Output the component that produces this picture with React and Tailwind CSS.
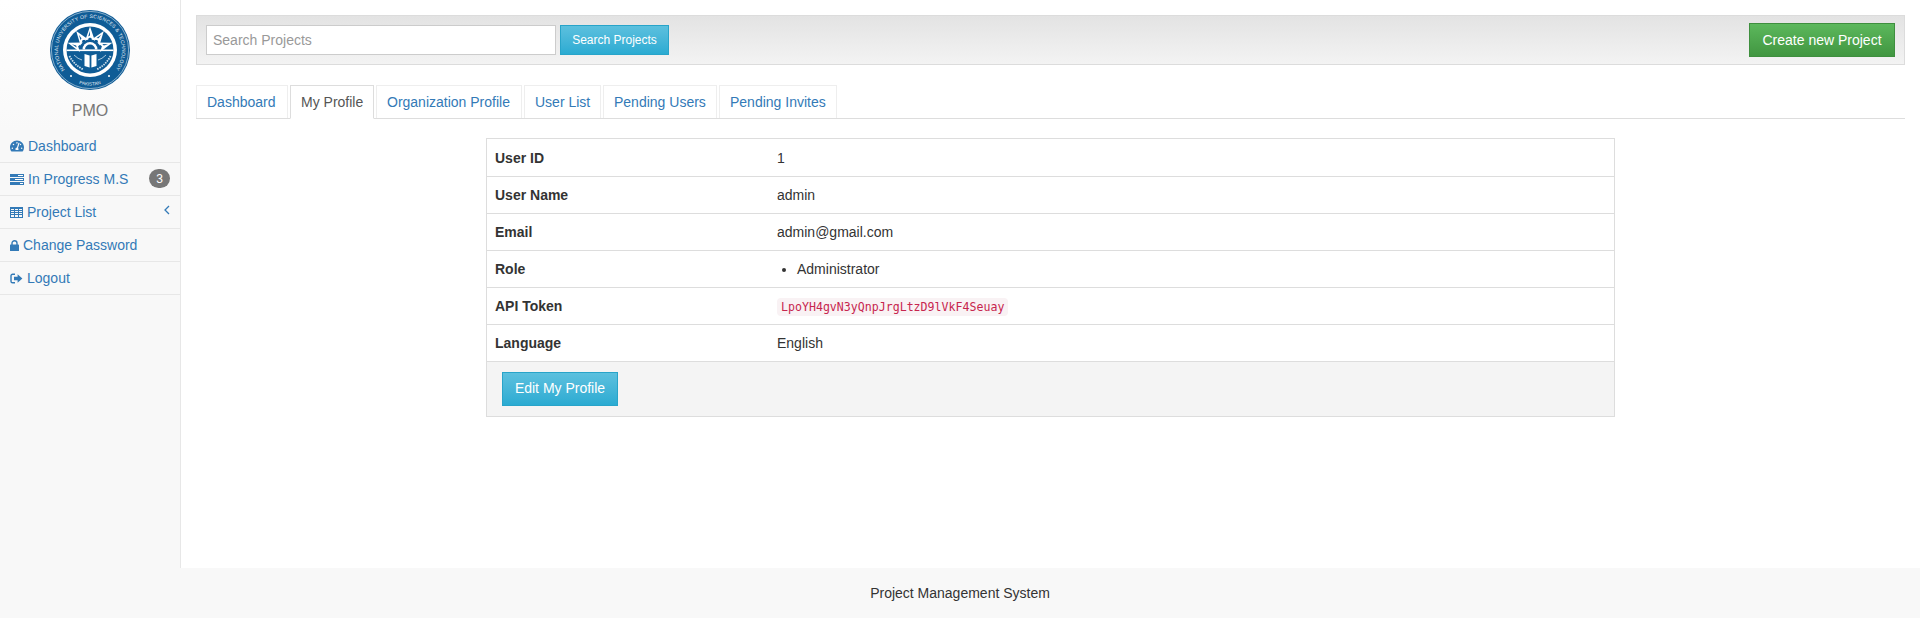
import React from 'react';
import { FaTachometerAlt } from 'react-icons/fa';

const TasksIcon = () => (
  <svg width="14" height="11" viewBox="0 0 14 11" className="shrink-0">
    <rect x="0" y="0" width="14" height="3" fill="#337ab7" />
    <rect x="0" y="4" width="14" height="3" fill="#337ab7" />
    <rect x="0" y="8" width="14" height="3" fill="#337ab7" />
    <rect x="8" y="1" width="5" height="1" fill="#fff" />
    <rect x="5" y="5" width="8" height="1" fill="#fff" />
    <rect x="10" y="9" width="3" height="1" fill="#fff" />
  </svg>
);

const GridIcon = () => (
  <svg width="13" height="11" viewBox="0 0 13 11" className="shrink-0">
    <rect x="0.5" y="0.5" width="12" height="10" fill="none" stroke="#337ab7" />
    <path d="M0 3.5H13M0 5.5H13M0 7.5H13M4.5 0V11M8.5 0V11" stroke="#337ab7" strokeWidth="1" fill="none" />
    <rect x="0" y="0" width="13" height="2" fill="#337ab7" />
  </svg>
);

const LockIcon = () => (
  <svg width="9" height="11" viewBox="0 0 9 11" className="shrink-0">
    <path d="M2 5V3.2a2.5 2.5 0 0 1 5 0V5" fill="none" stroke="#337ab7" strokeWidth="1.4" />
    <rect x="0" y="4.6" width="9" height="6.4" rx="0.6" fill="#337ab7" />
  </svg>
);

const LogoutIcon = () => (
  <svg width="13" height="11" viewBox="0 0 13 11" className="shrink-0">
    <path d="M5 1.2H2.6A1.6 1.6 0 0 0 1 2.8v5.4a1.6 1.6 0 0 0 1.6 1.6H5" fill="none" stroke="#337ab7" strokeWidth="1.4" />
    <path d="M4 3.8h3.6V1.2L12.4 5.5 7.6 9.8V7.2H4z" fill="#337ab7" />
  </svg>
);

// one ray of the star on the seal
const Ray = ({ angle }) => (
  <g transform={`rotate(${angle} 40 40)`}>
    <path d="M40 16.5 L35 31 L40 27.5 L45 31 Z" fill="#fff" />
    <path d="M40 21 L38.2 26.5 L40 25.4 Z" fill="#0f5c96" />
  </g>
);

// University seal, drawn by hand
const Seal = () => (
  <svg width="80" height="80" viewBox="0 0 80 80">
    <defs>
      <path id="sealTop" d="M 14.8 59.7 A 32 32 0 1 1 65.2 59.7" />
      <path id="sealBottom" d="M 24 71.7 A 35.5 35.5 0 0 0 56 71.7" />
    </defs>
    <circle cx="40" cy="40" r="40" fill="#0f5c96" />
    <circle cx="40" cy="40" r="38.6" fill="none" stroke="#fff" strokeWidth="0.5" />
    <text fontSize="5" fill="#e4eef5" fontFamily="Liberation Sans, sans-serif">
      <textPath href="#sealTop" textLength="142">NATIONAL UNIVERSITY OF SCIENCES &amp; TECHNOLOGY</textPath>
    </text>
    <text fontSize="4.6" fill="#e4eef5" fontFamily="Liberation Sans, sans-serif" textAnchor="middle">
      <textPath href="#sealBottom" startOffset="50%">PAKISTAN</textPath>
    </text>
    <circle cx="21" cy="66" r="1" fill="#fff" />
    <circle cx="59" cy="66" r="1" fill="#fff" />
    <circle cx="40" cy="40" r="27" fill="#fff" />
    <circle cx="40" cy="40" r="23.5" fill="#0f5c96" />
    <Ray angle={-72} />
    <Ray angle={-36} />
    <Ray angle={0} />
    <Ray angle={36} />
    <Ray angle={72} />
    <path d="M32.5 39.5 A 7.5 7.5 0 0 1 47.5 39.5 Z" fill="#fff" />
    <path d="M35 39.5 A 5 5 0 0 1 45 39.5 Z" fill="#0f5c96" />
    <rect x="16.5" y="39.5" width="47" height="1.6" fill="#fff" />
    <path d="M34.5 44 L39.6 45.5 L39.6 57.5 L34.5 56 Z" fill="#fff" />
    <path d="M46.5 44 L41.4 45.5 L41.4 57.5 L46.5 56 Z" fill="#fff" />
    <path d="M19.5 46 Q 24 55 33.5 59.5 M60.5 46 Q 56 55 46.5 59.5" fill="none" stroke="#cfe0ec" strokeWidth="1.8" strokeDasharray="1.5 1" />
    <path d="M24 45 Q 28 49 32 50 M56 45 Q 52 49 48 50" fill="none" stroke="#cfe0ec" strokeWidth="0.8" />
  </svg>
);

const sideLinks = [
  { label: 'Dashboard', icon: <FaTachometerAlt size={14} /> },
  { label: 'In Progress M.S', icon: <TasksIcon />, badge: '3' },
  { label: 'Project List', icon: <GridIcon />, arrow: true },
  { label: 'Change Password', icon: <LockIcon /> },
  { label: 'Logout', icon: <LogoutIcon /> },
];

const tabs = [
  { label: 'Dashboard', width: 'w-[92px]' },
  { label: 'My Profile', width: 'w-[84px]', active: true },
  { label: 'Organization Profile', width: 'w-[146px]' },
  { label: 'User List', width: 'w-[77px]' },
  { label: 'Pending Users', width: 'w-[114px]' },
  { label: 'Pending Invites', width: 'w-[118px]' },
];

function Sidebar() {
  return (
    <aside className="w-[181px] shrink-0 border-r border-[#e7e7e7] bg-[#f8f8f8]">
      <div className="h-[130px] flex flex-col items-center pt-[10px] bg-gradient-to-b from-white to-[#f9f9f9]">
        <Seal />
        <div className="mt-[11px] text-[16px] leading-[20px] text-[#777]">PMO</div>
      </div>
      {sideLinks.map((item) => (
        <div key={item.label} className="relative h-[33px] flex items-center gap-[4px] pl-[10px] border-b border-[#e7e7e7] text-[14px] text-[#337ab7]">
          {item.icon}
          <span>{item.label}</span>
          {item.badge && (
            <span className="absolute left-[149px] top-[6px] w-[21px] h-[19px] rounded-[10px] bg-[#777] text-white text-[12px] flex items-center justify-center">
              {item.badge}
            </span>
          )}
          {item.arrow && (
            <svg width="6" height="10" viewBox="0 0 6 10" className="absolute left-[164px] top-[9px]">
              <path d="M5 1 L1 5 L5 9" fill="none" stroke="#337ab7" strokeWidth="1.3" />
            </svg>
          )}
        </div>
      ))}
    </aside>
  );
}

function Toolbar() {
  return (
    <div className="h-[50px] flex items-center justify-between px-[9px] border border-[#dcdcdc] bg-gradient-to-b from-[#e3e3e3] to-[#f3f3f3]">
      <div className="flex items-center gap-[4px]">
        <input
          placeholder="Search Projects"
          className="w-[350px] h-[30px] px-[6px] bg-white border border-[#ccc] text-[14px] placeholder:text-[#999] outline-none"
        />
        <button className="w-[109px] h-[30px] border border-[#28a4c9] bg-gradient-to-b from-[#5bc0de] to-[#2aabd2] text-white text-[12px]">
          Search Projects
        </button>
      </div>
      <button className="w-[146px] h-[34px] border border-[#3e8f3e] bg-gradient-to-b from-[#5cb85c] to-[#419641] text-white text-[14px]">
        Create new Project
      </button>
    </div>
  );
}

function Tabs() {
  return (
    <ul className="flex h-[34px] mt-[20px] gap-[2px] border-b border-[#ddd] text-[14px]">
      {tabs.map((tab) =>
        tab.active ? (
          <li key={tab.label} className={`${tab.width} h-[34px] pl-[10px] flex items-center bg-white border border-[#ddd] border-b-white text-[#555]`}>
            {tab.label}
          </li>
        ) : (
          <li key={tab.label} className={`${tab.width} h-[33px] pl-[10px] flex items-center border border-[#eee] border-b-0 text-[#337ab7]`}>
            {tab.label}
          </li>
        )
      )}
    </ul>
  );
}

function ProfileTable() {
  const rows = [
    ['User ID', '1'],
    ['User Name', 'admin'],
    ['Email', 'admin@gmail.com'],
    ['Role', <ul className="list-disc pl-[20px]"><li>Administrator</li></ul>],
    ['API Token', <code className="px-[4px] py-[2px] bg-[#f9f2f4] text-[#c7254e] text-[11.6px] rounded-[4px] font-['DejaVu_Sans_Mono',monospace]">LpoYH4gvN3yQnpJrgLtzD9lVkF4Seuay</code>],
    ['Language', 'English'],
  ];
  return (
    <div className="w-[1129px] mx-auto mt-[19px] border border-[#ddd] text-[14px] text-[#333]">
      <table className="w-full border-collapse">
        <tbody>
          {rows.map(([label, value]) => (
            <tr key={label} className="h-[37px] border-b border-[#ddd] [&:first-child>td]:pt-[3px]">
              <td className="w-[290px] pl-[8px] pt-[1px] font-bold">{label}</td>
              <td className="pt-[1px]">{value}</td>
            </tr>
          ))}
        </tbody>
      </table>
      <div className="h-[54px] bg-[#f4f4f4] flex items-center pl-[15px]">
        <button className="w-[116px] h-[34px] border border-[#28a4c9] bg-gradient-to-b from-[#5bc0de] to-[#2aabd2] text-white text-[14px]">
          Edit My Profile
        </button>
      </div>
    </div>
  );
}

export default function App() {
  return (
    <div className="h-screen flex flex-col bg-white font-['Liberation_Sans',Arial,sans-serif]">
      <div className="flex flex-1 min-h-0">
        <Sidebar />
        <main className="flex-1 min-w-0 pt-[15px] px-[15px]">
          <Toolbar />
          <Tabs />
          <ProfileTable />
        </main>
      </div>
      <footer className="h-[50px] shrink-0 bg-[#f8f8f8] flex items-center justify-center text-[14px] text-[#333]">
        Project Management System
      </footer>
    </div>
  );
}
